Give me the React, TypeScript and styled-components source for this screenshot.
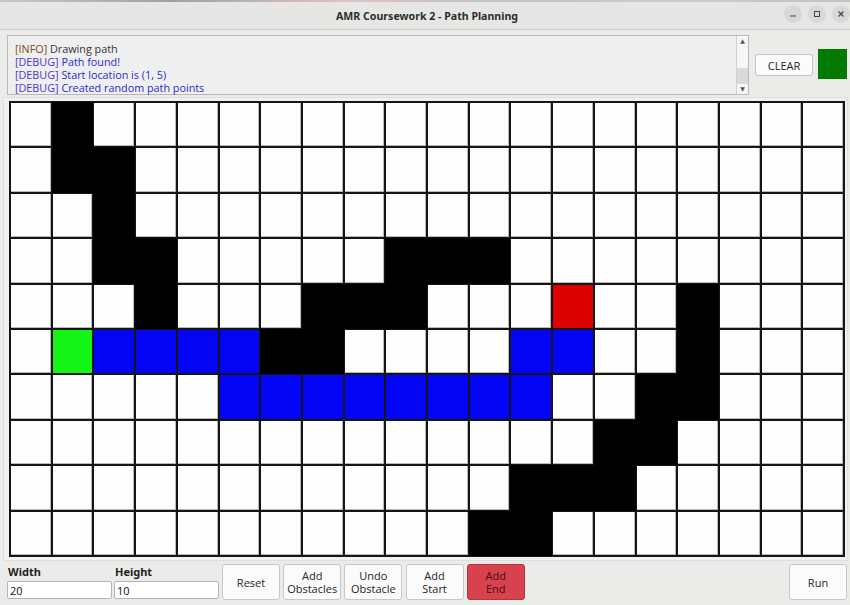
import React from "react";
import styled, { createGlobalStyle } from "styled-components";

const Global = createGlobalStyle`
  html, body { margin: 0; padding: 0; background: #e9e9e8; }
  body { font-family: "Open Sans", "Noto Sans", "DejaVu Sans", sans-serif; }
`;

const Window = styled.div`
  width: 850px;
  height: 605px;
  background: #ebebea;
  display: flex;
  flex-direction: column;
  overflow: hidden;
  position: relative;
`;

const TopStrip = styled.div`
  height: 2px;
  background: linear-gradient(90deg, #9aa 0%, #556 20%, #c99 40%, #99a 60%, #aab 80%, #999 100%);
  opacity: 0.5;
`;

const TitleBar = styled.div`
  height: 27px;
  background: #e6e6e5;
  border-bottom: 1px solid #cdcdcd;
  display: flex;
  align-items: center;
  justify-content: center;
  position: relative;
`;

const Title = styled.div`
  font-family: "Noto Sans", "Open Sans", sans-serif;
  font-weight: 700;
  font-size: 10.6px;
  color: #2c2c2c;
  padding-left: 4px;
`;

const WinButtons = styled.div`
  position: absolute;
  right: 0px;
  top: 3px;
  display: flex;
  gap: 6px;
`;

const WinBtn = styled.div`
  width: 18px;
  height: 18px;
  border-radius: 50%;
  background: #d8d8d7;
  display: flex;
  align-items: center;
  justify-content: center;
`;

const TopRow = styled.div`
  display: flex;
  align-items: center;
  padding: 5px 3px 0 7px;
  height: 65px;
  box-sizing: border-box;
`;

const LogBox = styled.div`
  width: 742px;
  height: 60px;
  box-sizing: border-box;
  border: 1px solid #b9b9b9;
  background: #efefef;
  display: flex;
  align-self: flex-start;
`;

const LogText = styled.div`
  flex: 1;
  padding: 6px 0 0 7px;
  font-family: "Open Sans", "Noto Sans", sans-serif;
  font-size: 10.8px;
  line-height: 13px;
`;

const Line = styled.div`
  white-space: nowrap;
  height: 13px;
`;

const Tag = styled.span<{ $c: string }>`
  color: ${(p) => p.$c};
`;

const Msg = styled.span<{ $c: string }>`
  color: ${(p) => p.$c};
`;

const Scrollbar = styled.div`
  width: 11px;
  border-left: 1px solid #d0d0d0;
  background: #f6f6f6;
  display: flex;
  flex-direction: column;
  justify-content: space-between;
`;

const Arrow = styled.div`
  height: 10px;
  display: flex;
  align-items: center;
  justify-content: center;
  font-size: 6px;
  color: #555;
`;

const Thumb = styled.div`
  height: 16px;
  background: #d9d9d9;
  margin-top: auto;
`;

const ClearButton = styled.button`
  margin-left: 6px;
  margin-top: 0;
  width: 58px;
  height: 22px;
  box-sizing: border-box;
  border: 1px solid #c4c4c4;
  border-radius: 3px;
  background: #fbfbfb;
  font-family: "Open Sans", "Noto Sans", sans-serif;
  font-size: 11px;
  color: #1e1e1e;
  padding: 0;
`;

const Indicator = styled.div`
  margin-left: 5px;
  margin-top: -2px;
  width: 29px;
  height: 30px;
  background: #007a00;
`;

const GridFrame = styled.div`
  margin: 2px 2px 0 3px;
  border: 1px solid #dedede;
  background: #f1f1f1;
  padding: 3px 2px 3px 5px;
`;

const Grid = styled.div`
  width: 836px;
  height: 456px;
  box-sizing: border-box;
  background: #151515;
  padding: 2px;
  display: grid;
  grid-template-columns: repeat(20, 1fr);
  grid-template-rows: repeat(10, 1fr);
  gap: 2px;
`;

const cellColors: Record<string, string> = {
  ".": "#fefefe",
  "#": "#000000",
  B: "#0505f5",
  G: "#15f515",
  R: "#dc0000",
};

const Cell = styled.div<{ $k: string }>`
  background: ${(p) => cellColors[p.$k]};
  box-shadow: ${(p) =>
    p.$k === "." ? "inset -1px -1px 0 #b8b8b8" : "none"};
  ${(p) => (p.$k === "#" ? "margin: -1px;" : "")}
`;

const BottomRow = styled.div`
  display: flex;
  align-items: flex-end;
  padding: 3px 3px 0 7px;
`;

const Field = styled.div`
  display: flex;
  flex-direction: column;
  width: 105px;
  margin-right: 2px;
`;

const Label = styled.div`
  font-family: "Noto Sans", "Open Sans", sans-serif;
  font-weight: 700;
  font-size: 11px;
  color: #222;
  height: 15px;
  line-height: 14px;
  padding-left: 1px;
  margin-bottom: 1px;
`;

const Input = styled.input`
  width: 105px;
  height: 18px;
  box-sizing: border-box;
  border: 1px solid #b4b4b4;
  border-radius: 2px;
  background: #ffffff;
  font-family: "Open Sans", "Noto Sans", sans-serif;
  font-size: 11px;
  padding: 0 2px;
  color: #111;
  outline: none;
  margin-bottom: 3px;
`;

const Buttons = styled.div`
  display: flex;
  gap: 3.2px;
  margin-left: 1px;
`;

const ActionButton = styled.button<{ $danger?: boolean }>`
  width: 58px;
  height: 36px;
  box-sizing: border-box;
  border: 1px solid ${(p) => (p.$danger ? "#b03442" : "#c8c8c8")};
  border-radius: 3px;
  background: ${(p) => (p.$danger ? "#d8424f" : "#fbfbfb")};
  color: ${(p) => (p.$danger ? "#4a0a12" : "#262626")};
  font-family: "Open Sans", "Noto Sans", sans-serif;
  font-size: 11px;
  line-height: 13px;
  padding: 0;
  margin-bottom: 2px;
`;

const Spacer = styled.div`
  flex: 1;
`;

const rows = [
  ".#..................",
  ".##.................",
  "..#.................",
  "..##.....###........",
  "...#...###...R..#...",
  ".GBBBB##....BB..#...",
  ".....BBBBBBBB..##...",
  "..............##....",
  "............###.....",
  "...........##.......",
];

const logLines = [
  { tag: "[INFO]", tc: "#7a4b14", msg: " Drawing path", mc: "#333333" },
  { tag: "[DEBUG]", tc: "#4a34d2", msg: " Path found!", mc: "#2a2ad4" },
  { tag: "[DEBUG]", tc: "#4a34d2", msg: " Start location is (1, 5)", mc: "#2a2ad4" },
  { tag: "[DEBUG]", tc: "#4a34d2", msg: " Created random path points", mc: "#2a2ad4" },
];

export default function App() {
  return (
    <Window>
      <Global />
      <TopStrip />
      <TitleBar>
        <Title>AMR Coursework 2 - Path Planning</Title>
        <WinButtons>
          <WinBtn>
            <svg width="8" height="8" viewBox="0 0 8 8">
              <line x1="1" y1="6" x2="7" y2="6" stroke="#444" strokeWidth="1" />
            </svg>
          </WinBtn>
          <WinBtn>
            <svg width="8" height="8" viewBox="0 0 8 8">
              <rect x="1.5" y="1.5" width="5" height="5" fill="none" stroke="#444" strokeWidth="1" />
            </svg>
          </WinBtn>
          <WinBtn>
            <svg width="8" height="8" viewBox="0 0 8 8">
              <path d="M1.5 1.5 L6.5 6.5 M6.5 1.5 L1.5 6.5" stroke="#444" strokeWidth="1.2" />
            </svg>
          </WinBtn>
        </WinButtons>
      </TitleBar>
      <TopRow>
        <LogBox>
          <LogText>
            {logLines.map((l, i) => (
              <Line key={i}>
                <Tag $c={l.tc}>{l.tag}</Tag>
                <Msg $c={l.mc}>{l.msg}</Msg>
              </Line>
            ))}
          </LogText>
          <Scrollbar>
            <Arrow>▲</Arrow>
            <Thumb />
            <Arrow>▼</Arrow>
          </Scrollbar>
        </LogBox>
        <ClearButton>CLEAR</ClearButton>
        <Indicator />
      </TopRow>
      <GridFrame>
        <Grid>
          {rows.flatMap((r, y) =>
            r.split("").map((k, x) => <Cell key={`${x}-${y}`} $k={k} />)
          )}
        </Grid>
      </GridFrame>
      <BottomRow>
        <Field>
          <Label>Width</Label>
          <Input defaultValue="20" />
        </Field>
        <Field>
          <Label>Height</Label>
          <Input defaultValue="10" />
        </Field>
        <Buttons>
          <ActionButton>Reset</ActionButton>
          <ActionButton>
            Add
            <br />
            Obstacles
          </ActionButton>
          <ActionButton>
            Undo
            <br />
            Obstacle
          </ActionButton>
          <ActionButton>
            Add
            <br />
            Start
          </ActionButton>
          <ActionButton $danger>
            Add
            <br />
            End
          </ActionButton>
        </Buttons>
        <Spacer />
        <ActionButton>Run</ActionButton>
      </BottomRow>
    </Window>
  );
}
